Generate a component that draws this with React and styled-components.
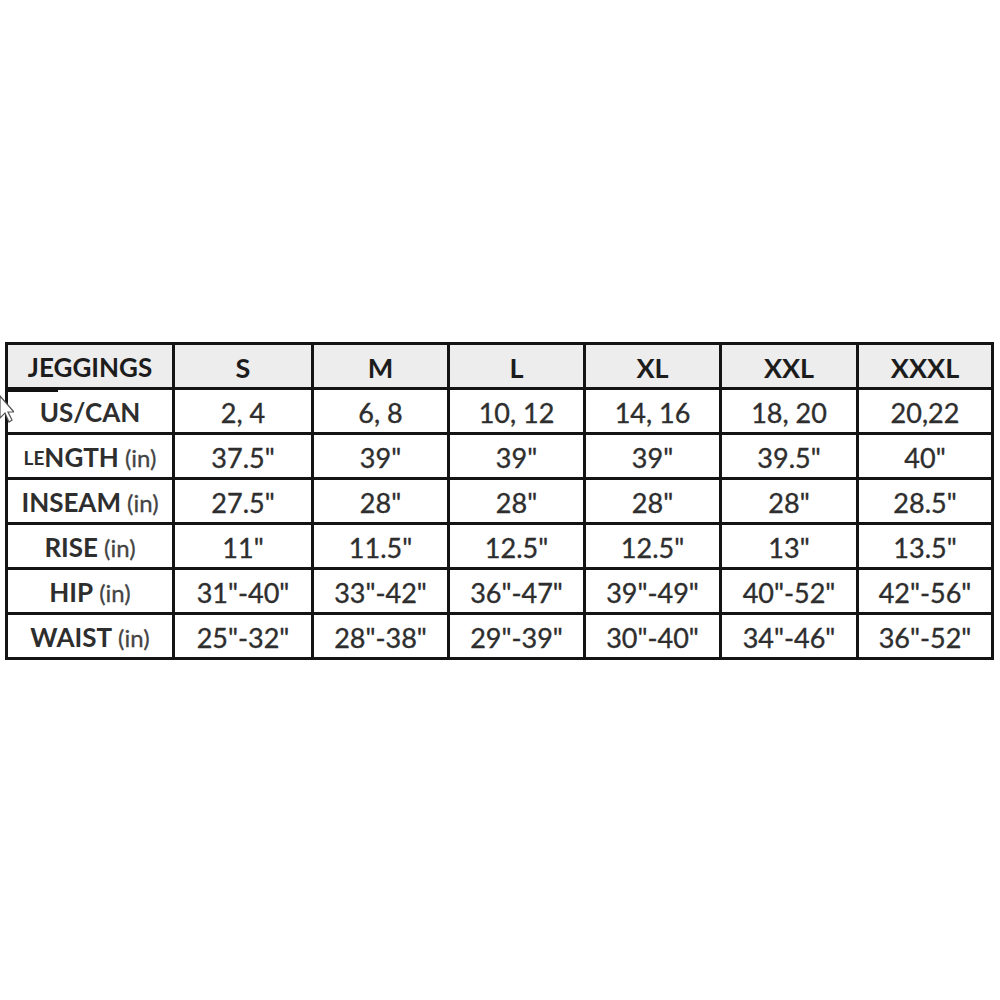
import React from "react";
import styled, { createGlobalStyle } from "styled-components";

const Global = createGlobalStyle`
  html, body { margin: 0; padding: 0; background: #ffffff; }
  body { font-family: Lato, "Open Sans", "Liberation Sans", sans-serif; }
`;

const Page = styled.div`
  width: 1000px;
  height: 1000px;
  padding: 342px 0 0 5px;
  box-sizing: border-box;
  position: relative;
  overflow: hidden;
`;

const Grid = styled.div`
  display: grid;
  grid-template-columns: 164px 136px 133px 133px 133px 134px 132px;
  grid-auto-rows: 42px;
  gap: 3px;
  padding: 3px;
  background: #141414;
  width: max-content;
`;

const Cell = styled.div`
  display: flex;
  align-items: center;
  justify-content: center;
  background: ${(p) => (p.$head ? "#ededed" : "#ffffff")};
  color: ${(p) => (p.$head ? "#1c1c1c" : "#2e2e2e")};
  font-size: ${(p) => (p.$label ? "26px" : "27px")};
  font-weight: ${(p) => (p.$head || p.$label ? 700 : 400)};
  -webkit-text-stroke: ${(p) => (p.$head || p.$label ? "0" : "0.35px")};
  white-space: nowrap;
  padding-top: 2px;
  box-sizing: border-box;
`;

const Unit = styled.span`
  font-weight: 400;
  color: #444;
  margin-left: 6px;
  font-size: 24px;
  -webkit-text-stroke: 0.3px;
`;

const Small = styled.span`
  font-size: 19px;
`;

const Mark = styled.div`
  position: absolute;
  left: 6px;
  top: 387px;
  width: 52px;
  height: 5px;
  background: #111;
`;

const Cursor = styled.svg`
  position: absolute;
  left: -2px;
  top: 394px;
`;

const header = ["JEGGINGS", "S", "M", "L", "XL", "XXL", "XXXL"];
const rows = [
  [<>US/CAN</>, "2, 4", "6, 8", "10, 12", "14, 16", "18, 20", "20,22"],
  [<><Small>LE</Small>NGTH<Unit>(in)</Unit></>, '37.5"', '39"', '39"', '39"', '39.5"', '40"'],
  [<>INSEAM<Unit>(in)</Unit></>, '27.5"', '28"', '28"', '28"', '28"', '28.5"'],
  [<>RISE<Unit>(in)</Unit></>, '11"', '11.5"', '12.5"', '12.5"', '13"', '13.5"'],
  [<>HIP<Unit>(in)</Unit></>, '31"-40"', '33"-42"', '36"-47"', '39"-49"', '40"-52"', '42"-56"'],
  [<>WAIST<Unit>(in)</Unit></>, '25"-32"', '28"-38"', '29"-39"', '30"-40"', '34"-46"', '36"-52"'],
];

export default function App() {
  return (
    <Page>
      <Global />
      <Grid>
        {header.map((h, j) => (
          <Cell key={h} $head $label={j === 0}>{h}</Cell>
        ))}
        {rows.map((r, i) =>
          r.map((c, j) => (
            <Cell key={i + "-" + j} $label={j === 0}>{c}</Cell>
          ))
        )}
      </Grid>
      <Mark />
      <Cursor width="16" height="30" viewBox="0 0 16 30">
        <path d="M2 2 L2 24 L7 19 L11 28 L14 26 L10 18 L16 18 Z" fill="#fff" stroke="#555" strokeWidth="1.2" />
      </Cursor>
    </Page>
  );
}
